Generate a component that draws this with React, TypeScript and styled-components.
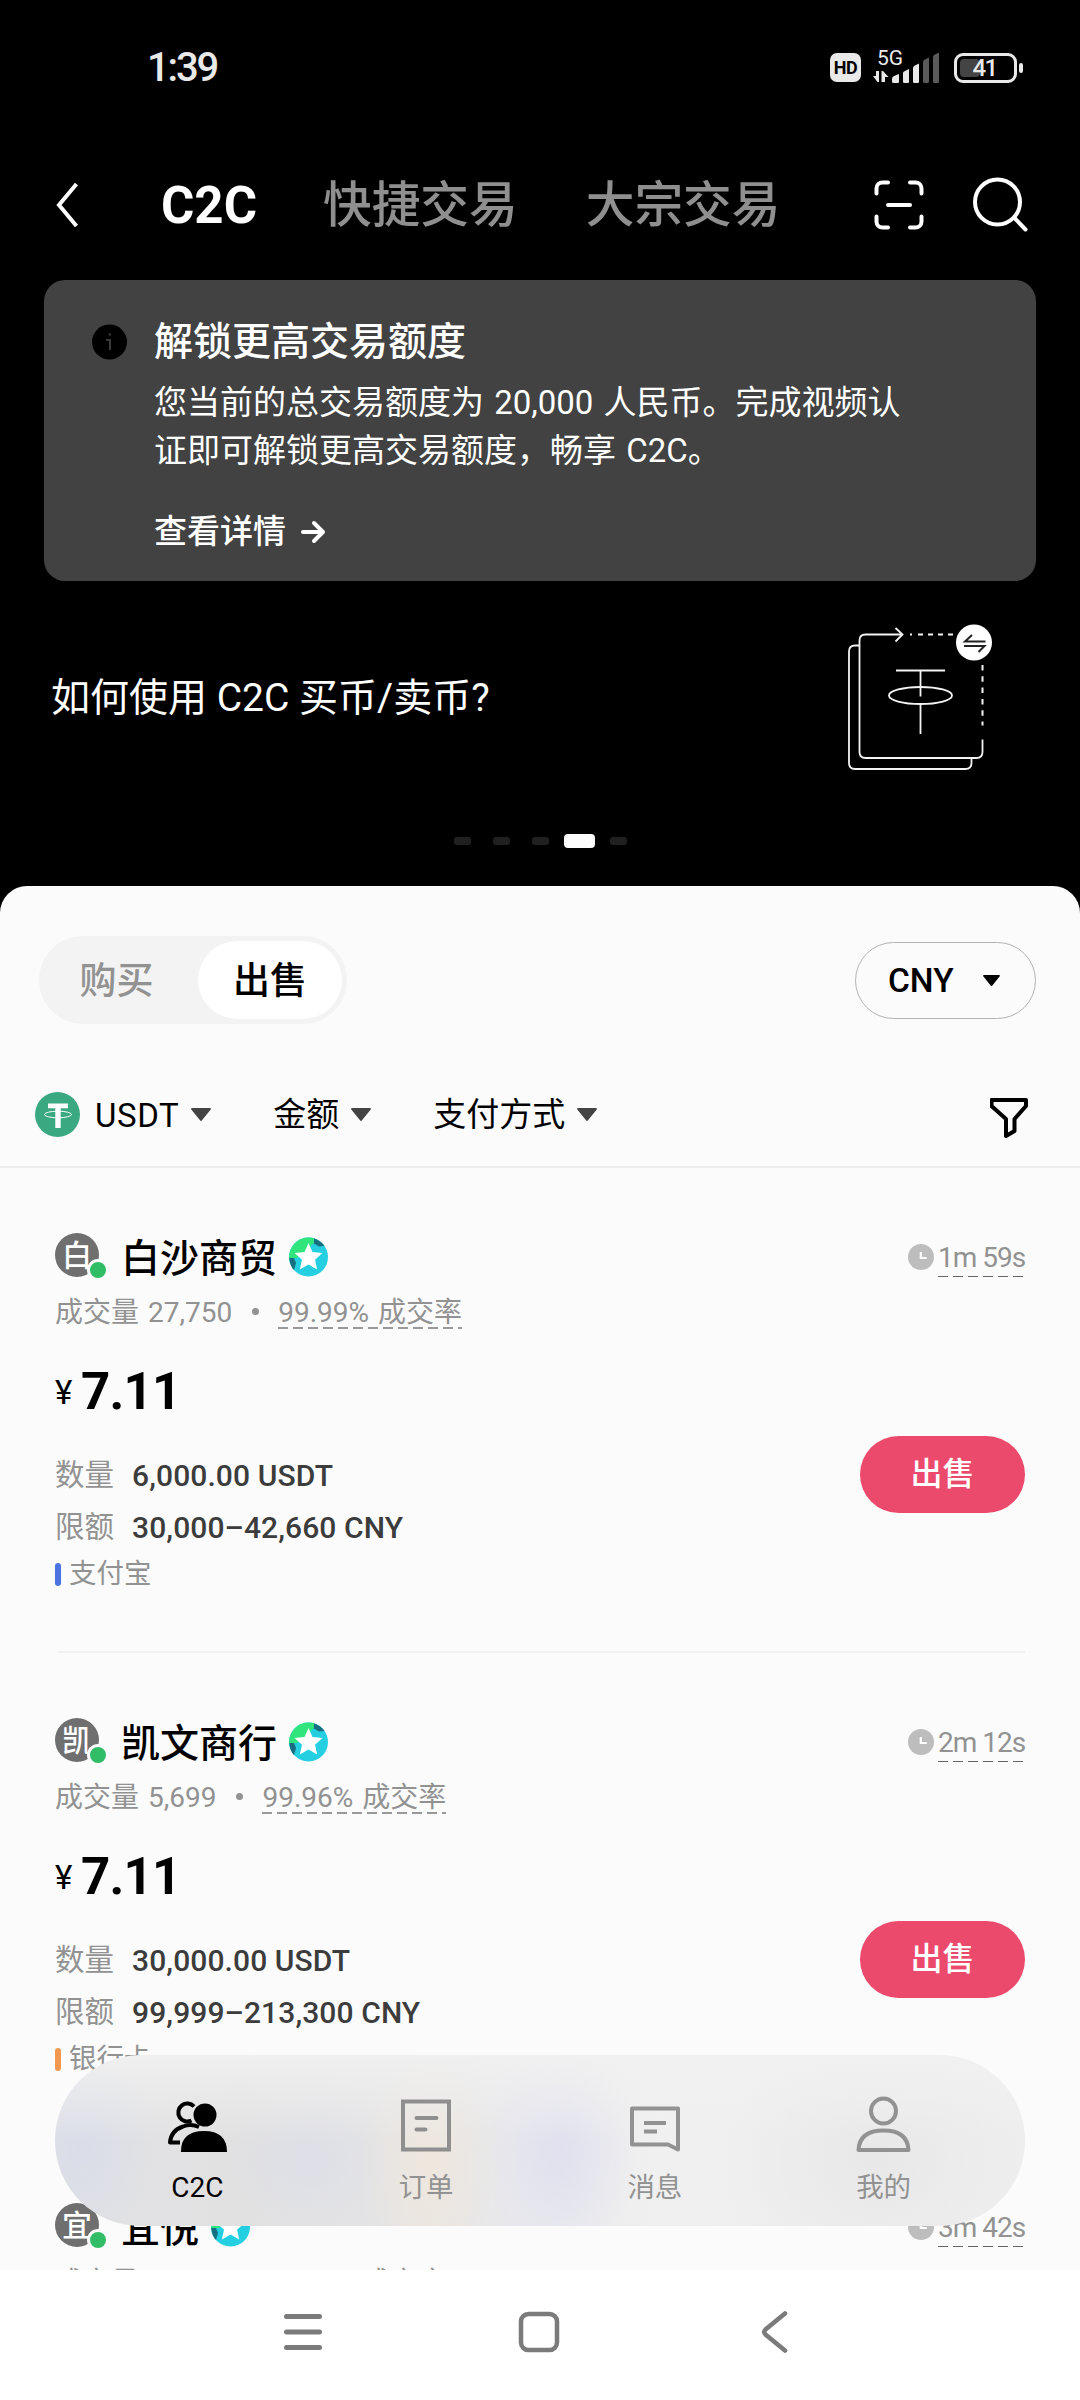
import React from "react";
import styled, { createGlobalStyle } from "styled-components";

const GlobalStyle = createGlobalStyle`
  *, *::before, *::after { box-sizing: border-box; }
  html, body { margin: 0; padding: 0; background: #fff; }
  body { font-family: Roboto, "Noto Sans CJK SC", sans-serif; }
  svg { display: block; flex: none; }
  button { font: inherit; border: 0; margin: 0; padding: 0; background: none; color: inherit; }
`;

const Phone = styled.div`
  width: 1080px;
  height: 2400px;
  display: flex;
  flex-direction: column;
  overflow: hidden;
  background: #000;
`;

const Screen = styled.div`
  position: relative;
  height: 2270px;
  flex: none;
  display: flex;
  flex-direction: column;
  overflow: hidden;
`;

/* ---------- status bar ---------- */

const StatusBar = styled.div`
  height: 135px;
  flex: none;
  display: flex;
  align-items: center;
  justify-content: space-between;
  padding: 0 57px 0 147px;
  color: #e9e9e9;
`;

const Clock = styled.span`
  font-size: 40px;
  line-height: 44px;
  font-weight: 500;
  letter-spacing: -2.2px;
  padding-top: 1px;
`;

const StatusIcons = styled.div`
  display: flex;
  align-items: center;
`;

const HdBadge = styled.span`
  width: 31px;
  height: 29px;
  border-radius: 7px;
  background: #e9e9e9;
  color: #000;
  font-size: 18px;
  font-weight: 700;
  line-height: 29px;
  text-align: center;
  letter-spacing: -0.4px;
`;

const Signal = styled.div`
  width: 68px;
  height: 34px;
  margin: -1px 13px 0 12px;
  position: relative;
`;

const NetworkLabel = styled.span`
  position: absolute;
  left: 4px;
  top: -4px;
  font-size: 21px;
  line-height: 24px;
`;

const Battery = styled.div`
  display: flex;
  align-items: center;
  gap: 2px;
`;

const BatteryShell = styled.div`
  width: 63px;
  height: 30px;
  border: 3px solid #e9e9e9;
  border-radius: 9px;
  padding: 3px;
  display: grid;
`;

const BatteryLevel = styled.div`
  grid-area: 1 / 1;
  width: 20px;
  height: 18px;
  border-radius: 4px;
  background: #444;
`;

const BatteryText = styled.span`
  grid-area: 1 / 1;
  font-size: 24px;
  font-weight: 500;
  line-height: 18px;
  text-align: center;
  letter-spacing: -1.7px;
  padding: 0 2px 0 0;
`;

const BatteryTip = styled.div`
  width: 4px;
  height: 10px;
  border-radius: 2px;
  background: #e9e9e9;
`;

/* ---------- header ---------- */

const Header = styled.header`
  height: 139px;
  flex: none;
  display: flex;
  align-items: center;
  padding: 0 51px 0 55px;
`;

const HeaderTabs = styled.nav`
  flex: 1;
  display: flex;
  align-items: center;
  margin-left: 80px;
  padding-top: 2px;
`;

const HeaderTab = styled.span<{ $active?: boolean; $gap?: number }>`
  font-size: ${(p) => (p.$active ? 51 : 48.7)}px;
  line-height: 60px;
  font-weight: ${(p) => (p.$active ? 700 : 500)};
  color: ${(p) => (p.$active ? "#fff" : "#8f8f8f")};
  margin-right: ${(p) => p.$gap ?? 0}px;
  white-space: nowrap;
`;

const HeaderActions = styled.div`
  display: flex;
  align-items: center;
  gap: 49px;
`;

/* ---------- notice ---------- */

const Notice = styled.section`
  margin: 6px 44px 0;
  height: 301px;
  flex: none;
  border-radius: 21px;
  background: #424242;
  color: #fff;
  padding: 38px 48px 0;
  display: flex;
  gap: 26px;
`;

const NoticeIcon = styled.span`
  width: 36px;
  height: 36px;
  margin-top: 6px;
  flex: none;
`;

const NoticeTitle = styled.h2`
  margin: 0;
  font-size: 39px;
  line-height: 48px;
  font-weight: 500;
`;

const NoticeText = styled.p`
  margin: 13px 0 0;
  font-size: 33px;
  line-height: 48px;
  word-spacing: 2px;
  white-space: nowrap;
`;

const NoticeLink = styled.span`
  margin-top: 33px;
  display: flex;
  align-items: center;
  gap: 15px;
  font-size: 33px;
  line-height: 48px;
  font-weight: 500;
`;

/* ---------- promo ---------- */

const Promo = styled.section`
  margin-top: 43px;
  height: 146px;
  flex: none;
  padding: 0 86px 0 51px;
  display: flex;
  align-items: center;
  justify-content: space-between;
  color: #fff;
  font-size: 39px;
  line-height: 48px;
  & > span { padding-top: 2px; }
`;

const Pager = styled.div`
  height: 116px;
  flex: none;
  padding: 64px 0 0 1px;
  display: flex;
  justify-content: center;
  align-items: flex-start;
  gap: 22px;
`;

const PagerDot = styled.span<{ $active?: boolean }>`
  width: ${(p) => (p.$active ? 31 : 17)}px;
  height: ${(p) => (p.$active ? 14 : 8)}px;
  margin: ${(p) => (p.$active ? "0 -7px" : "3px 0 0")};
  border-radius: ${(p) => (p.$active ? 4 : 3)}px;
  background: ${(p) => (p.$active ? "#fcfcfc" : "#202020")};
`;

/* ---------- sheet ---------- */

const Sheet = styled.main`
  flex: 1;
  min-height: 0;
  background: #fbfbfb;
  border-radius: 27px 27px 0 0;
  color: #000;
  overflow: hidden;
`;

const SideRow = styled.div`
  display: flex;
  justify-content: space-between;
  align-items: center;
  padding: 50px 44px 0 39px;
`;

const Segmented = styled.div`
  width: 308px;
  height: 88px;
  border-radius: 44px;
  background: #f3f3f3;
  padding: 5px;
  display: flex;
  justify-content: flex-end;
`;

const Segment = styled.button<{ $active?: boolean }>`
  width: ${(p) => (p.$active ? 144 : 154)}px;
  height: 78px;
  border-radius: 39px;
  background: ${(p) => (p.$active ? "#fff" : "transparent")};
  color: ${(p) => (p.$active ? "#000" : "#929292")};
  font-size: 37px;
  font-weight: 500;
  line-height: 74px;
  text-align: center;
  padding: 4px ${(p) => (p.$active ? 0 : 9)}px 0 0;
`;

const CurrencyButton = styled.button`
  width: 181px;
  height: 77px;
  border: 1px solid #b3b3b3;
  border-radius: 39px;
  display: flex;
  align-items: center;
  justify-content: space-between;
  padding: 0 35px 0 32px;
  font-size: 33.5px;
  font-weight: 500;
`;

const Filters = styled.div`
  height: 144px;
  border-bottom: 2px solid #efefef;
  padding: 39px 51px 0 35px;
  display: flex;
`;

const FilterItem = styled.span<{ $left: number; $gap: number }>`
  height: 103px;
  margin-left: ${(p) => p.$left}px;
  display: flex;
  align-items: center;
  gap: ${(p) => p.$gap}px;
  font-size: 33px;
  line-height: 42px;
  white-space: nowrap;
`;

const CoinFilter = styled(FilterItem)`
  & > span {
    padding: 2px 12px 0 15px;
    letter-spacing: 0.6px;
  }
`;

const FilterEnd = styled.span`
  margin-left: auto;
  padding-top: 34px;
`;

/* ---------- offers ---------- */

const Offer = styled.article`
  height: 485px;
  padding: 64px 55px 0;
  display: flex;
  flex-direction: column;
`;

const OfferHead = styled.div`
  height: 46px;
  display: flex;
  align-items: center;
  & > svg { margin-top: 3px; }
`;

const Avatar = styled.span`
  position: relative;
  width: 44px;
  height: 44px;
  border-radius: 50%;
  background: #6f6f6f;
  color: #fff;
  font-size: 30px;
  font-weight: 500;
  line-height: 46px;
  text-align: center;
`;

const OnlineDot = styled.i`
  position: absolute;
  left: 32px;
  top: 26px;
  width: 22px;
  height: 22px;
  border-radius: 50%;
  border: 3px solid #fbfbfb;
  background: #31bd65;
`;

const OfferName = styled.span`
  margin: 8px 12px 0 22px;
  font-size: 39px;
  line-height: 46px;
  font-weight: 500;
`;

const TimeLimit = styled.span`
  margin-left: auto;
  display: flex;
  align-items: center;
  gap: 4px;
  padding-top: 4px;
`;

const dashed = (color: string, thick: number) => `
  background: repeating-linear-gradient(90deg, ${color} 0 10px, transparent 10px 15px) left bottom / 100% ${thick}px no-repeat;
`;

const TimeText = styled.span`
  width: 87px;
  height: 40px;
  font-size: 28px;
  line-height: 41px;
  letter-spacing: -1px;
  color: #929292;
  white-space: nowrap;
  ${dashed("#666", 1.5)}
`;

const Stats = styled.div`
  height: 40px;
  margin-top: 13px;
  display: flex;
  font-size: 28px;
  line-height: 43px;
  word-spacing: 2px;
  color: #929292;
  white-space: nowrap;
`;

const StatDot = styled.i`
  width: 7px;
  height: 7px;
  border-radius: 50%;
  background: #929292;
  margin: 17px 19px 0 20px;
`;

const Rate = styled.span`
  width: 184px;
  height: 38px;
  ${dashed("#999", 2)}
`;

const OfferBody = styled.div`
  margin-top: 31px;
  display: flex;
  justify-content: space-between;
`;

const Price = styled.div`
  height: 60px;
  display: flex;
  gap: 8px;
  font-size: 51px;
  font-weight: 700;
  line-height: 60px;
  letter-spacing: -0.8px;
  margin-bottom: 28px;
`;

const Yen = styled.span`
  font-size: 33px;
  font-weight: 400;
  padding-top: 1px;
  width: 18px;
`;

const Detail = styled.div`
  height: 52px;
  display: flex;
  gap: 18px;
  font-size: 29.5px;
  line-height: 51px;
  color: #929292;
`;

const DetailValue = styled.span`
  font-size: 30px;
  color: #3c3c3c;
  font-weight: 500;
  letter-spacing: 0.1px;
`;

const Payment = styled.div<{ $color: string }>`
  height: 40px;
  display: flex;
  align-items: center;
  gap: 8px;
  font-size: 27.5px;
  line-height: 40px;
  color: #929292;
  &::before {
    content: "";
    width: 6px;
    height: 23px;
    border-radius: 3px;
    background: ${(p) => p.$color};
  }
`;

const SellButton = styled.button`
  width: 165px;
  height: 77px;
  margin-top: 74px;
  border-radius: 39px;
  background: #ec4a6c;
  color: #fff;
  font-size: 32px;
  font-weight: 500;
  line-height: 77px;
`;

const Divider = styled.hr`
  margin: 57px 0 0 3px;
  border: 0;
  height: 2px;
  background: #f1f1f1;
`;

/* ---------- floating tab bar ---------- */

const TabBar = styled.nav`
  position: absolute;
  left: 55px;
  right: 55px;
  top: 2055px;
  height: 171px;
  border-radius: 86px;
  padding: 0 27px 0 28px;
  display: grid;
  grid-template-columns: repeat(4, 1fr);
  background:
    linear-gradient(180deg, rgba(241, 241, 241, 0.9) 0, rgba(241, 241, 241, 0) 50%),
    radial-gradient(ellipse 75px 110px at 25px 90px, #dadde9 0, rgba(218, 221, 233, 0) 100%),
    radial-gradient(ellipse 70px 150px at 375px 110px, #eee7dd 0, rgba(238, 231, 221, 0) 100%),
    radial-gradient(ellipse 75px 120px at 505px 95px, #e0e0ef 0, rgba(224, 224, 239, 0) 100%),
    radial-gradient(ellipse 80px 70px at 255px 105px, #dedfe7 0, rgba(222, 223, 231, 0) 100%),
    radial-gradient(ellipse 150px 140px at 820px 100px, #e8e8e8 0, rgba(232, 232, 232, 0) 100%),
    linear-gradient(90deg, #e2e2e4 0, #e1e1e2 20%, #e4e4e6 35%, #e9e9ec 48%, #f0f0f0 62%, #eeeeee 100%);
`;

const Tab = styled.span<{ $active?: boolean }>`
  display: flex;
  flex-direction: column;
  align-items: center;
  padding-top: 40px;
  color: ${(p) => (p.$active ? "#000" : "#929292")};
  font-size: ${(p) => (p.$active ? 28 : 27.5)}px;
  line-height: 40px;
  & > svg { margin-bottom: 13px; }
`;

/* ---------- system navigation ---------- */

const SystemNav = styled.footer`
  height: 130px;
  flex: none;
  background: #fff;
  display: flex;
  padding: 39px 0 0 282px;
`;

/* ---------- icons ---------- */

const SignalIcon = () => (
  <svg width="68" height="34" viewBox="0 0 68 34">
    <g fill="#e9e9e9">
      <path d="M0 26h3v-5h3v11H4.500z" />
      <path d="M8.500 32V21H10l5.500 6H12v5z" />
      <path d="M19 32v-3.500q0-1.500 2-2.500l5-2v8q0 1-1.500 1h-4Q19 33 19 32z" />
      <path d="M30 32V23q0-1 1.500-1.800L36 19v13q0 1-1.500 1h-3Q30 33 30 32z" />
      <path d="M40 32V18q0-1.500 1.500-2.300L46 13.500V32q0 1-1.500 1h-3Q40 33 40 32z" />
    </g>
    <g fill="#5a5a5a">
      <path d="M50 32V12q0-1.500 1.500-2.300L56 7.500V32q0 1-1.500 1h-3Q50 33 50 32z" />
      <path d="M60 32V7q0-1.500 1.500-2.300L66 2.500V32q0 1-1.500 1h-3Q60 33 60 32z" />
    </g>
  </svg>
);

const BackIcon = () => (
  <svg width="26" height="48" viewBox="0 0 26 48" fill="none" stroke="#fff" strokeWidth="4">
    <path d="M21.500 3L4 24l17.500 21" />
  </svg>
);

const ScanIcon = () => (
  <svg width="50" height="50" viewBox="0 0 50 50" fill="none" stroke="#fff" strokeWidth="4" strokeLinecap="round">
    <path d="M2.500 13.500V8.500a6 6 0 0 1 6-6h5.500M36 2.500h5.500a6 6 0 0 1 6 6v5M47.500 36.500v5a6 6 0 0 1-6 6H36M14 47.500H8.500a6 6 0 0 1-6-6v-5M14 25h22" />
  </svg>
);

const SearchIcon = () => (
  <svg width="56" height="56" viewBox="0 0 56 56" fill="none" stroke="#fff" strokeWidth="4" strokeLinecap="round">
    <circle cx="24.500" cy="25" r="22.500" />
    <path d="M41.500 41l11 11.500" />
  </svg>
);

const InfoIcon = () => (
  <svg width="36" height="36" viewBox="0 0 36 36">
    <circle cx="17.500" cy="18" r="17.500" fill="#000" />
    <path d="M14 16h4v10M16.500 10.500h2.500" fill="none" stroke="#3a3a3a" strokeWidth="2" />
  </svg>
);

const ArrowIcon = () => (
  <svg width="26" height="24" viewBox="0 0 26 24" fill="none" stroke="#fff" strokeWidth="4">
    <path d="M2 12h19" strokeLinecap="round" />
    <path d="M13 3l9 9-9 9" strokeLinecap="round" strokeLinejoin="round" />
  </svg>
);

const PromoArt = () => (
  <svg width="147" height="146" viewBox="847 624 147 146" fill="none" stroke="#f4f4f4" strokeWidth="1.800">
    <path d="M859.500 645.500H855q-6 0-6 6V763q0 6 6 6h110.500q6 0 6-6v-4.500" />
    <path d="M902 634.500h-36.500q-6 0-6 6V752q0 6 6 6H976.500q6 0 6-6v-12.500" />
    <path d="M895.500 628l7 6.500-7 7" />
    <path d="M910 634.500h44" strokeDasharray="2 6 5 5 5 5 5 5 5 5" />
    <path d="M982.500 665v60.500" strokeDasharray="5.500 5.800" strokeWidth="2" />
    <path d="M896 670.500h49M920.500 670.500v26M920.500 704v30" />
    <ellipse cx="920.500" cy="695.500" rx="31.500" ry="8.500" />
    <circle cx="974" cy="642.500" r="18" fill="#fff" stroke="none" />
    <g stroke="#222" strokeWidth="2">
      <path d="M985.500 641.500H965l7-6.500M964 646h20.500l-6 6" />
    </g>
  </svg>
);

const Caret = ({ w = 20, h = 13, color = "#434343" }: { w?: number; h?: number; color?: string }) => (
  <svg width={w} height={h} viewBox="0 0 20 13">
    <path d="M1 0h18q1.500.5.500 1.800L11 12.300q-1 1.200-2 0L.500 1.800Q-.500.500 1 0z" fill={color} />
  </svg>
);

const TetherIcon = () => (
  <svg width="45" height="45" viewBox="0 0 45 45">
    <circle cx="22.500" cy="22.500" r="22.500" fill="#3aa881" />
    <ellipse cx="23" cy="22.500" rx="13.500" ry="3.300" fill="none" stroke="#fff" strokeWidth="1" />
    <path d="M13 11.500h20v4.800h-7.300V36h-5.400V16.300H13z" fill="#fff" />
  </svg>
);

const FunnelIcon = () => (
  <svg width="39" height="42" viewBox="0 0 39 42" fill="none" stroke="#000" strokeWidth="4" strokeLinejoin="round">
    <path d="M1.500 3h34.500v6L24.500 22v12L16 39V22L1.500 9z" />
  </svg>
);

const StarBadge = () => (
  <svg width="39" height="40" viewBox="0 0 39 40">
    <circle cx="19.500" cy="20" r="19.500" fill="#23cfe0" />
    <path d="M25 1.300Q32 4 35.500 9L30 9.500 24 6z" fill="#176f80" />
    <path d="M.3 21Q1 29 5 33l2-7-2-5z" fill="#176f80" />
    <path d="M.2 21A19.500 19.500 0 0 1 25 1.200V6L8 21z" fill="#2fe57c" />
    <path d="M19.500 6l4 9 10 1-7.500 6.700L28.200 32.500 19.500 27.500l-8.700 5L13 22.700 5.500 16l10-1z" fill="#fff" />
  </svg>
);

const ClockIcon = () => (
  <svg width="26" height="26" viewBox="0 0 26 26">
    <circle cx="13" cy="13" r="13" fill="#bdbdbd" />
    <path d="M12.800 8v6h6" fill="none" stroke="#fff" strokeWidth="2.200" />
  </svg>
);

const PeopleIcon = () => (
  <svg width="60" height="60" viewBox="0 0 60 60">
    <g fill="none" stroke="#000" strokeWidth="4">
      <path d="M27 11.500A9 9 0 1 0 24.500 25.500" />
      <path d="M32 32Q24 28.500 16 31.500 4 35.500 3 47.500h10" strokeLinejoin="round" />
    </g>
    <circle cx="38" cy="20" r="11.500" />
    <path d="M14 56.500Q14 36 37 36t23 21H14z" />
  </svg>
);

const OrderIcon = () => (
  <svg width="60" height="60" viewBox="0 0 60 60" fill="none" stroke="#8f8f8f" strokeWidth="4">
    <path d="M7 6.500h46v48H7z" />
    <path d="M20.500 23h20M20.500 34.500h9" strokeLinecap="round" />
  </svg>
);

const MessageIcon = () => (
  <svg width="60" height="60" viewBox="0 0 60 60" fill="none" stroke="#929292" strokeWidth="4">
    <path d="M7 13.500h46v41l-10-5H7z" strokeLinejoin="round" />
    <path d="M19 28h22M19 36.500h13" />
  </svg>
);

const UserIcon = () => (
  <svg width="60" height="60" viewBox="0 0 60 60" fill="none" stroke="#929292" strokeWidth="4">
    <circle cx="29.500" cy="16" r="12.500" />
    <path d="M4.500 55Q5.500 35.500 29.500 35.500T54.500 55z" strokeLinejoin="round" />
  </svg>
);

const MenuIcon = styled.svg`
  width: 42px;
  height: 48px;
  margin-right: 193px;
`;

const HomeIcon = styled.svg`
  width: 44px;
  height: 48px;
  margin-right: 199px;
`;

const NavBackIcon = styled.svg`
  width: 30px;
  height: 48px;
`;

/* ---------- data ---------- */

const offers = [
  { name: "白沙商贸", volume: "27,750", rate: "99.99%", time: "1m 59s", amount: "6,000.00 USDT", limit: "30,000–42,660 CNY", pay: "支付宝", color: "#4a72e0" },
  { name: "凯文商行", volume: "5,699", rate: "99.96%", time: "2m 12s", amount: "30,000.00 USDT", limit: "99,999–213,300 CNY", pay: "银行卡", color: "#f0984f" },
];

type HeadProps = { name: string; time: string; volume: string; rate: string };

const OfferSummary = ({ name, time, volume, rate }: HeadProps) => (
  <>
    <OfferHead>
      <Avatar>
        {name[0]}
        <OnlineDot />
      </Avatar>
      <OfferName>{name}</OfferName>
      <StarBadge />
      <TimeLimit>
        <ClockIcon />
        <TimeText>{time}</TimeText>
      </TimeLimit>
    </OfferHead>
    <Stats>
      <span>成交量 {volume}</span>
      <StatDot />
      <Rate>{rate} 成交率</Rate>
    </Stats>
  </>
);

export default function App() {
  return (
    <Phone>
      <GlobalStyle />
      <Screen>
        <StatusBar>
          <Clock>1:39</Clock>
          <StatusIcons>
            <HdBadge>HD</HdBadge>
            <Signal>
              <SignalIcon />
              <NetworkLabel>5G</NetworkLabel>
            </Signal>
            <Battery>
              <BatteryShell>
                <BatteryLevel />
                <BatteryText>41</BatteryText>
              </BatteryShell>
              <BatteryTip />
            </Battery>
          </StatusIcons>
        </StatusBar>

        <Header>
          <BackIcon />
          <HeaderTabs>
            <HeaderTab $active $gap={66}>C2C</HeaderTab>
            <HeaderTab $gap={68}>快捷交易</HeaderTab>
            <HeaderTab>大宗交易</HeaderTab>
          </HeaderTabs>
          <HeaderActions>
            <ScanIcon />
            <SearchIcon />
          </HeaderActions>
        </Header>

        <Notice>
          <NoticeIcon>
            <InfoIcon />
          </NoticeIcon>
          <div>
            <NoticeTitle>解锁更高交易额度</NoticeTitle>
            <NoticeText>
              您当前的总交易额度为 20,000 人民币。完成视频认
              <br />
              证即可解锁更高交易额度，畅享 C2C。
            </NoticeText>
            <NoticeLink>
              查看详情
              <ArrowIcon />
            </NoticeLink>
          </div>
        </Notice>

        <Promo>
          <span>如何使用 C2C 买币/卖币?</span>
          <PromoArt />
        </Promo>
        <Pager>
          <PagerDot />
          <PagerDot />
          <PagerDot />
          <PagerDot $active />
          <PagerDot />
        </Pager>

        <Sheet>
          <SideRow>
            <Segmented>
              <Segment>购买</Segment>
              <Segment $active>出售</Segment>
            </Segmented>
            <CurrencyButton>
              CNY
              <Caret w={17} h={11} color="#000" />
            </CurrencyButton>
          </SideRow>
          <Filters>
            <CoinFilter $left={0} $gap={0}>
              <TetherIcon />
              <span>USDT</span>
              <Caret />
            </CoinFilter>
            <FilterItem $left={62} $gap={12}>
              金额
              <Caret />
            </FilterItem>
            <FilterItem $left={62} $gap={12}>
              支付方式
              <Caret />
            </FilterItem>
            <FilterEnd>
              <FunnelIcon />
            </FilterEnd>
          </Filters>

          {offers.map((o) => (
            <Offer key={o.name}>
              <OfferSummary {...o} />
              <OfferBody>
                <div>
                  <Price>
                    <Yen>¥</Yen>7.11
                  </Price>
                  <Detail>
                    数量<DetailValue>{o.amount}</DetailValue>
                  </Detail>
                  <Detail>
                    限额<DetailValue>{o.limit}</DetailValue>
                  </Detail>
                  <Payment $color={o.color}>{o.pay}</Payment>
                </div>
                <SellButton>出售</SellButton>
              </OfferBody>
              <Divider />
            </Offer>
          ))}
          <Offer>
            <OfferSummary name="宜悦" time="3m 42s" volume="5,699" rate="99.96%" />
          </Offer>
        </Sheet>

        <TabBar>
          <Tab $active>
            <PeopleIcon />
            C2C
          </Tab>
          <Tab>
            <OrderIcon />
            订单
          </Tab>
          <Tab>
            <MessageIcon />
            消息
          </Tab>
          <Tab>
            <UserIcon />
            我的
          </Tab>
        </TabBar>
      </Screen>

      <SystemNav>
        <MenuIcon viewBox="0 0 42 48" stroke="#7b7b7b" strokeWidth="5" strokeLinecap="round">
          <path d="M4.500 7.500h33M4.500 23h33M4.500 38.500h33" />
        </MenuIcon>
        <HomeIcon viewBox="0 0 44 48" fill="none" stroke="#7b7b7b" strokeWidth="4.500">
          <rect x="4" y="5" width="36" height="36" rx="7.500" />
        </HomeIcon>
        <NavBackIcon viewBox="0 0 30 48" fill="none" stroke="#7b7b7b" strokeWidth="4.500" strokeLinecap="round">
          <path d="M25 4.500L5.500 20.500Q3 23 5.500 25.500L25 41.500" />
        </NavBackIcon>
      </SystemNav>
    </Phone>
  );
}
